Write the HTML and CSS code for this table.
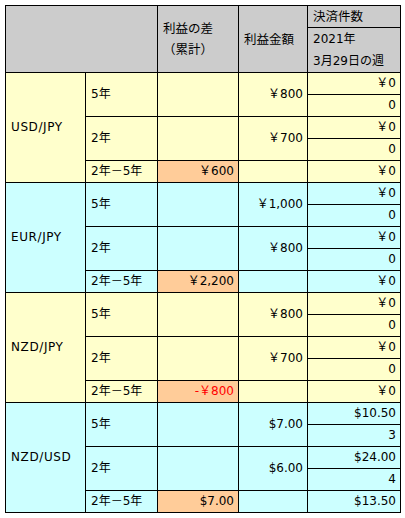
FILE: index.html
```html
<!DOCTYPE html>
<html lang="ja">
<head>
<meta charset="utf-8">
<link rel="stylesheet" href="styles.css">
</head>
<body>
<table class="tbl">
  <colgroup>
    <col class="c1"><col class="c2"><col class="c3"><col class="c4"><col class="c5">
  </colgroup>
  <tr class="h1">
    <td class="hd" colspan="2" rowspan="2"></td>
    <td class="hd jp" rowspan="2">利益の差<br>（累計）</td>
    <td class="hd jp" rowspan="2">利益金額</td>
    <td class="hd jp">決済件数</td>
  </tr>
  <tr>
    <td class="hd week">2021年<br>3月29日の週</td>
  </tr>

  <tr class="y">
    <td class="pair" rowspan="5">USD/JPY</td>
    <td rowspan="2">5年</td><td rowspan="2"></td><td class="r" rowspan="2">￥800</td><td class="r">￥0</td>
  </tr>
  <tr class="y"><td class="r">0</td></tr>
  <tr class="y">
    <td rowspan="2">2年</td><td rowspan="2"></td><td class="r" rowspan="2">￥700</td><td class="r">￥0</td>
  </tr>
  <tr class="y"><td class="r">0</td></tr>
  <tr class="y">
    <td>2年－5年</td><td class="r or">￥600</td><td></td><td class="r">￥0</td>
  </tr>

  <tr class="c">
    <td class="pair" rowspan="5">EUR/JPY</td>
    <td rowspan="2">5年</td><td rowspan="2"></td><td class="r" rowspan="2">￥1,000</td><td class="r">￥0</td>
  </tr>
  <tr class="c"><td class="r">0</td></tr>
  <tr class="c">
    <td rowspan="2">2年</td><td rowspan="2"></td><td class="r" rowspan="2">￥800</td><td class="r">￥0</td>
  </tr>
  <tr class="c"><td class="r">0</td></tr>
  <tr class="c">
    <td>2年－5年</td><td class="r or">￥2,200</td><td></td><td class="r">￥0</td>
  </tr>

  <tr class="y">
    <td class="pair" rowspan="5">NZD/JPY</td>
    <td rowspan="2">5年</td><td rowspan="2"></td><td class="r" rowspan="2">￥800</td><td class="r">￥0</td>
  </tr>
  <tr class="y"><td class="r">0</td></tr>
  <tr class="y">
    <td rowspan="2">2年</td><td rowspan="2"></td><td class="r" rowspan="2">￥700</td><td class="r">￥0</td>
  </tr>
  <tr class="y"><td class="r">0</td></tr>
  <tr class="y">
    <td>2年－5年</td><td class="r or neg">-￥800</td><td></td><td class="r">￥0</td>
  </tr>

  <tr class="c">
    <td class="pair" rowspan="5">NZD/USD</td>
    <td rowspan="2">5年</td><td rowspan="2"></td><td class="r" rowspan="2">$7.00</td><td class="r">$10.50</td>
  </tr>
  <tr class="c"><td class="r">3</td></tr>
  <tr class="c">
    <td rowspan="2">2年</td><td rowspan="2"></td><td class="r" rowspan="2">$6.00</td><td class="r">$24.00</td>
  </tr>
  <tr class="c"><td class="r">4</td></tr>
  <tr class="c">
    <td>2年－5年</td><td class="r or">$7.00</td><td></td><td class="r">$13.50</td>
  </tr>
</table>
</body>
</html>
```

FILE: styles.css
```css
html, body {
  margin: 0;
  padding: 0;
  background: #ffffff;
}
body {
  padding: 5px;
}
.tbl {
  border-collapse: collapse;
  table-layout: fixed;
  width: 395px;
  font-family: "DejaVu Sans", "Noto Sans CJK JP", sans-serif;
  font-size: 12px;
  color: #000000;
}
.c1 { width: 80px; }
.c2 { width: 72px; }
.c3 { width: 81px; }
.c4 { width: 69px; }
.c5 { width: 93px; }
.tbl td {
  border: 1px solid #000000;
  padding: 0 4px 0 5px;
  line-height: 21px;
  height: 21px;
  vertical-align: middle;
  text-align: left;
  white-space: nowrap;
}
.tbl td.hd {
  background: #cccccc;
}
.tbl td.jp {
  font-size: 12.5px;
}
.tbl td.week {
  line-height: 22px;
  height: 44px;
  padding-top: 0;
}
.tbl td.pair {
  letter-spacing: 0.6px;
}
.y td { background: #ffffcc; }
.c td { background: #ccffff; }
.tbl td.or { background: #ffcc99; }
.tbl td.r { text-align: right; }
.tbl td.neg { color: #ff0000; }
```
